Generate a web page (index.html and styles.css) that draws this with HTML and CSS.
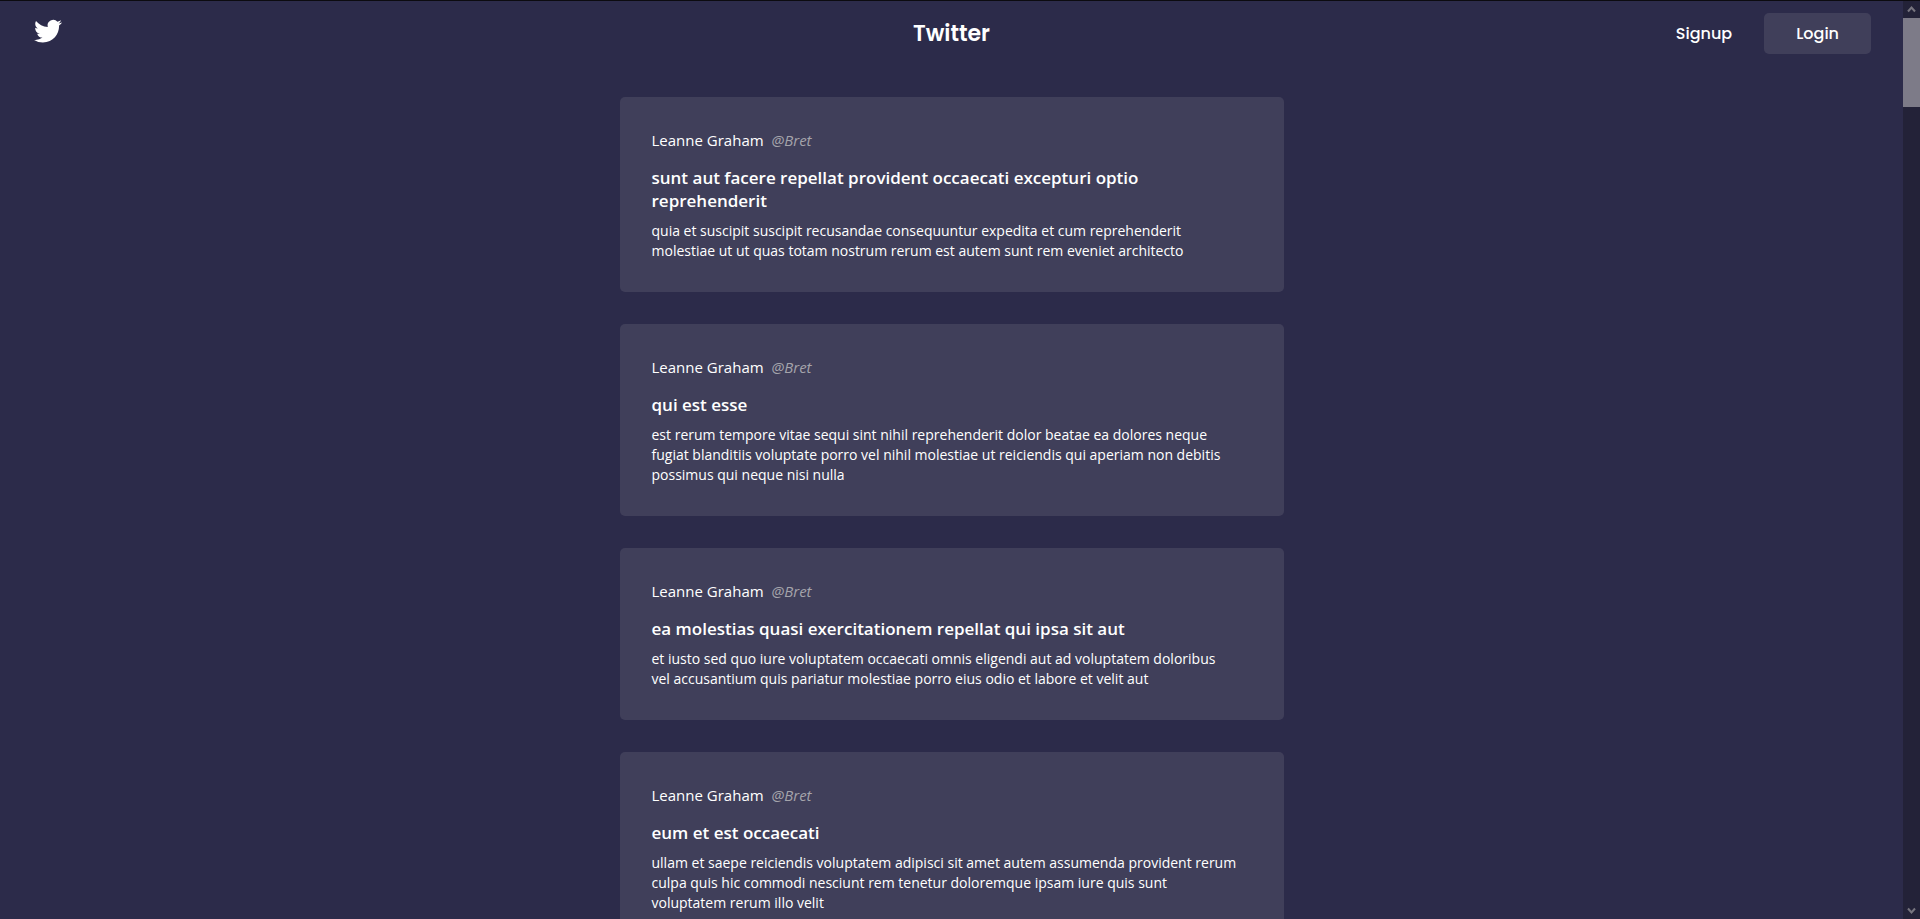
FILE: index.html
```html
<!DOCTYPE html>
<html lang="en">
<head>
<meta charset="utf-8">
<title>Twitter</title>
<link rel="stylesheet" href="styles.css">
</head>
<body>
<div class="page">
  <header class="navbar">
    <a class="logo" href="#" aria-label="Home">
      <svg class="logo-icon" viewBox="-1.800 0.6 27.6 27.6" aria-hidden="true"><path d="M23.953 4.57a10 10 0 01-2.825.775 4.958 4.958 0 002.163-2.723c-.951.555-2.005.959-3.127 1.184a4.92 4.92 0 00-8.384 4.482C7.69 8.095 4.067 6.13 1.64 3.162a4.822 4.822 0 00-.666 2.475c0 1.71.87 3.213 2.188 4.096a4.904 4.904 0 01-2.228-.616v.06a4.923 4.923 0 003.946 4.827 4.996 4.996 0 01-2.212.085 4.936 4.936 0 004.604 3.417 9.867 9.867 0 01-6.102 2.105c-.39 0-.779-.023-1.17-.067a13.995 13.995 0 007.557 2.209c9.053 0 13.998-7.496 13.998-13.985 0-.21 0-.42-.015-.63A9.935 9.935 0 0024 4.59z"/></svg>
    </a>
    <h1 class="brand">Twitter</h1>
    <nav class="actions">
      <a class="signup" href="#">Signup</a>
      <button class="login" type="button">Login</button>
    </nav>
  </header>
  <main class="feed">
    <article class="post">
      <p class="author">Leanne Graham <em class="handle">@Bret</em></p>
      <h2 class="title">sunt aut facere repellat provident occaecati excepturi optio reprehenderit</h2>
      <p class="text">quia et suscipit suscipit recusandae consequuntur expedita et cum reprehenderit<br>molestiae ut ut quas totam nostrum rerum est autem sunt rem eveniet architecto</p>
    </article>
    <article class="post">
      <p class="author">Leanne Graham <em class="handle">@Bret</em></p>
      <h2 class="title">qui est esse</h2>
      <p class="text">est rerum tempore vitae sequi sint nihil reprehenderit dolor beatae ea dolores neque<br>fugiat blanditiis voluptate porro vel nihil molestiae ut reiciendis qui aperiam non debitis<br>possimus qui neque nisi nulla</p>
    </article>
    <article class="post">
      <p class="author">Leanne Graham <em class="handle">@Bret</em></p>
      <h2 class="title">ea molestias quasi exercitationem repellat qui ipsa sit aut</h2>
      <p class="text">et iusto sed quo iure voluptatem occaecati omnis eligendi aut ad voluptatem doloribus<br>vel accusantium quis pariatur molestiae porro eius odio et labore et velit aut</p>
    </article>
    <article class="post">
      <p class="author">Leanne Graham <em class="handle">@Bret</em></p>
      <h2 class="title">eum et est occaecati</h2>
      <p class="text">ullam et saepe reiciendis voluptatem adipisci sit amet autem assumenda provident rerum<br>culpa quis hic commodi nesciunt rem tenetur doloremque ipsam iure quis sunt<br>voluptatem rerum illo velit</p>
    </article>
  </main>
</div>
<div class="scrollbar" aria-hidden="true">
  <svg class="arrow" viewBox="0 0 17 17"><path d="M5 10.500l3.500-4 3.500 4"/></svg>
  <div class="track"><div class="thumb"></div></div>
  <svg class="arrow" viewBox="0 0 17 17"><path d="M5 6.500l3.500 4 3.500-4"/></svg>
</div>
</body>
</html>
```
FILE: styles.css
```css
* {
  box-sizing: border-box;
  margin: 0;
}

body {
  display: flex;
  height: 100vh;
  overflow: hidden;
  border-top: 1px solid #0c0b10;
  background: #2c2b4a;
  color: #fff;
  font-family: "Segoe UI", "Open Sans", sans-serif;
}

.page {
  flex: 1;
  min-width: 0;
  overflow: hidden;
}

.navbar {
  display: grid;
  grid-template-columns: 1fr auto 1fr;
  align-items: center;
  padding: 12px 32px;
  font-family: Poppins, Inter, sans-serif;
}

.logo {
  justify-self: start;
}

.logo-icon {
  display: block;
  width: 32px;
  height: 32px;
  fill: #fff;
}

.brand {
  font-size: 22px;
  font-weight: 600;
  line-height: 32px;
}

.actions {
  display: flex;
  justify-self: end;
  align-items: center;
  gap: 32px;
  font-size: 16px;
  font-weight: 500;
}

.signup {
  color: inherit;
  text-decoration: none;
}

.login {
  padding: 8px 32px;
  border: 0;
  border-radius: 5px;
  background: #403f5a;
  color: inherit;
  font: inherit;
  line-height: 25px;
}

.feed {
  display: flex;
  flex-direction: column;
  gap: 32px;
  max-width: 664px;
  margin: 31px auto;
}

.post {
  padding: 32px 32px 31px;
  border-radius: 5px;
  background: #403f5a;
}

.author {
  margin-bottom: 15px;
  font-size: 15px;
  line-height: 22px;
}

.handle {
  margin-left: 4px;
  color: #a5a4ab;
}

.title {
  margin-bottom: 9px;
  font-size: 17px;
  font-weight: 600;
  line-height: 23px;
}

.text {
  font-size: 14px;
  line-height: 20px;
}

.scrollbar {
  display: flex;
  flex-direction: column;
  width: 17px;
  background: #232238;
}

.arrow {
  width: 17px;
  height: 17px;
  fill: none;
  stroke: #77757f;
  stroke-width: 2;
}

.track {
  flex: 1;
}

.thumb {
  height: 89px;
  background: #7d7b88;
}
```
